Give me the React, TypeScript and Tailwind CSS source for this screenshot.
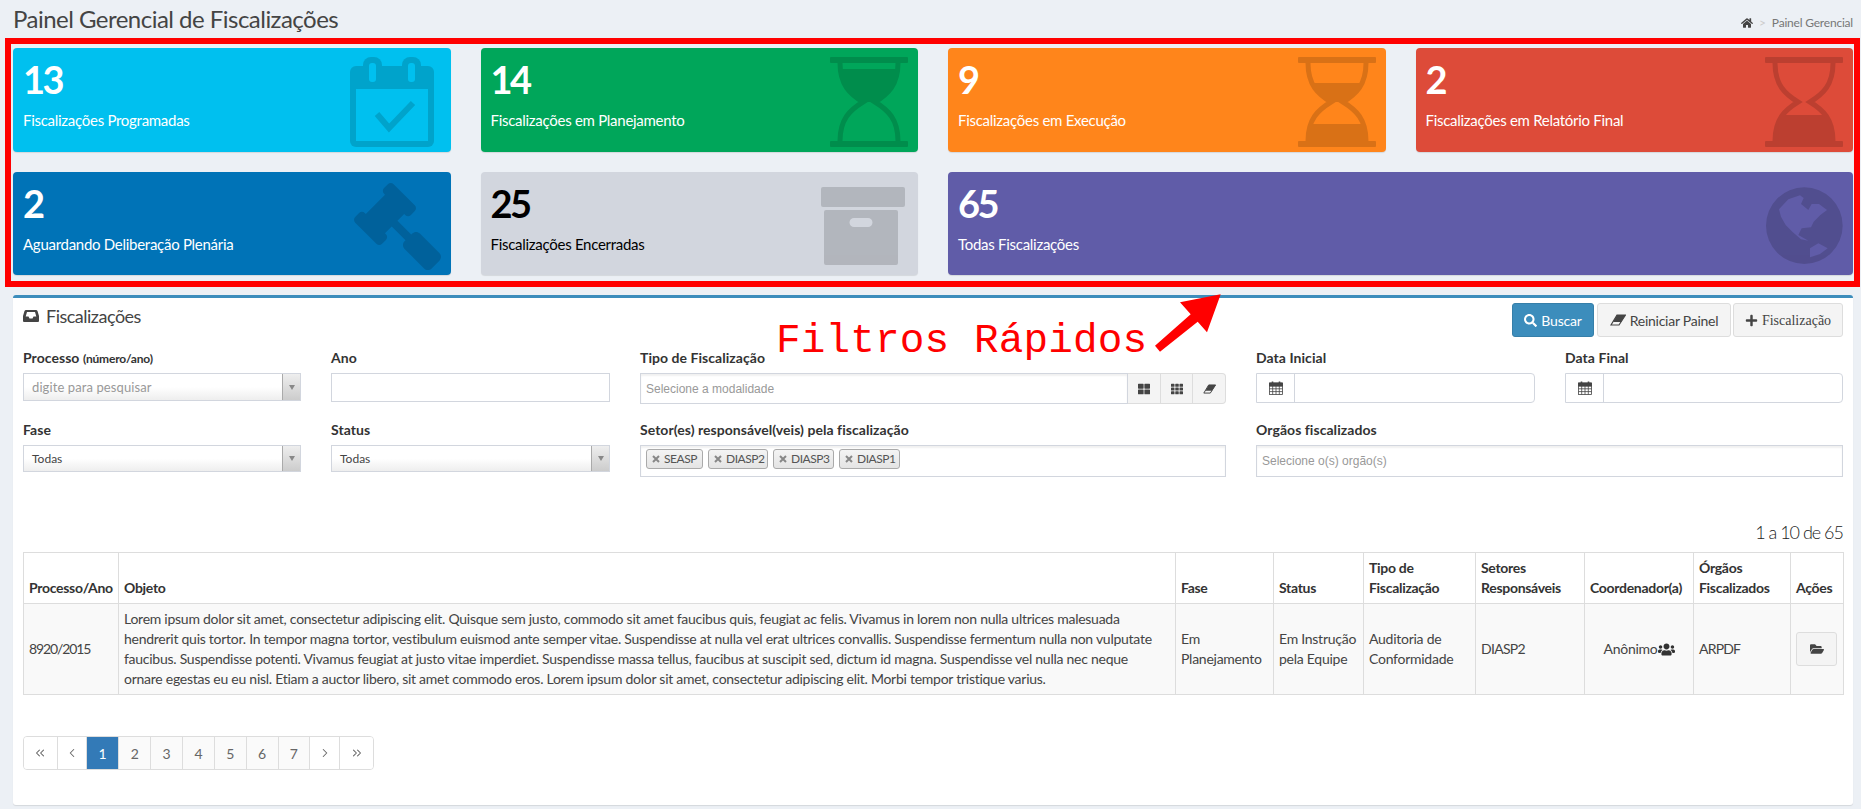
import type { ReactNode } from "react";
import { ChevronLeft, ChevronRight, ChevronsLeft, ChevronsRight } from "lucide-react";
import { FaFolderOpen, FaGavel, FaHome, FaPlus, FaSearch, FaTh, FaThLarge, FaUsers } from "react-icons/fa";

function Hourglass({ id, topFrom, bottomFrom }: { id: string; topFrom: number; bottomFrom: number }) {
  return (
    <svg viewBox="0 0 78 90" className="absolute right-[10px] top-[9px] h-[90px] w-[78px] opacity-15">
      <defs>
        <clipPath id={`top-${id}`}>
          <rect x="0" y={topFrom} width="78" height={46 - topFrom} />
        </clipPath>
        <clipPath id={`bottom-${id}`}>
          <rect x="0" y={bottomFrom} width="78" height={84 - bottomFrom} />
        </clipPath>
      </defs>
      <rect x="0" y="0" width="78" height="6" rx="1" />
      <rect x="0" y="84" width="78" height="6" rx="1" />
      <path d="M10 6C10 28 20 37 33 45C20 53 10 62 10 84" fill="none" stroke="#000" strokeWidth="5" />
      <path d="M68 6C68 28 58 37 45 45C58 53 68 62 68 84" fill="none" stroke="#000" strokeWidth="5" />
      <path clipPath={`url(#top-${id})`} d="M10 6C10 28 20 37 33 45H45C58 37 68 28 68 6Z" />
      <path clipPath={`url(#bottom-${id})`} d="M33 45C20 53 10 62 10 84H68C68 62 58 53 45 45Z" />
    </svg>
  );
}

function CalendarCheckIcon() {
  return (
    <svg viewBox="0 0 84 90" className="absolute right-[17px] top-[9px] h-[90px] w-[84px] opacity-15">
      <defs>
        <mask id="cal-mask">
          <rect width="84" height="90" fill="#fff" />
          <rect x="6" y="32" width="72" height="52" fill="#000" />
          <rect x="19" y="6" width="7" height="19" rx="3" fill="#000" />
          <rect x="58" y="6" width="7" height="19" rx="3" fill="#000" />
        </mask>
      </defs>
      <g mask="url(#cal-mask)">
        <rect x="0" y="9" width="84" height="81" rx="6" />
        <rect x="13" y="0" width="19" height="28" rx="8" />
        <rect x="52" y="0" width="19" height="28" rx="8" />
      </g>
      <path d="M27 57L39 71L63 46" fill="none" stroke="#000" strokeWidth="6" />
    </svg>
  );
}

function ArchiveIcon() {
  return (
    <svg viewBox="0 0 84 78" className="absolute right-[13px] top-[15px] h-[78px] w-[84px] opacity-15">
      <rect x="0" y="0" width="84" height="20" rx="2" />
      <path
        fillRule="evenodd"
        d="M5 23H75A2 2 0 0 1 77 25V76A2 2 0 0 1 75 78H5A2 2 0 0 1 3 76V25A2 2 0 0 1 5 23ZM33 31A3 3 0 0 0 33 40H47A3 3 0 0 0 47 31Z"
      />
    </svg>
  );
}

function GlobeIcon() {
  return (
    <svg viewBox="0 0 288 276" className="absolute right-[2px] top-[8px] h-[92px] w-[96px] opacity-15">
      <path
        fillRule="evenodd"
        d="M33 137a115 115 0 1 0 230 0a115 115 0 1 0 -230 0ZM72 88L100 58L135 46L146 54L138 72L160 90L170 72L192 72L216 90L196 105L176 125L168 142L140 145L130 165L160 182L138 178L112 155L92 135L78 110ZM165 205L190 190L218 205L195 222L165 232Z"
      />
    </svg>
  );
}

function InboxIcon() {
  return (
    <svg viewBox="0 0 16 14" className="h-[14px] w-4 text-[#444]">
      <path
        fill="currentColor"
        fillRule="evenodd"
        d="M3 1H13Q14 1 14.5 2L16 7V12Q16 13 15 13H1Q0 13 0 12V7L1.5 2Q2 1 3 1ZM4 3L2.7 7.5H5.5L6.5 9.5H9.5L10.5 7.5H13.3L12 3Z"
      />
    </svg>
  );
}

function EraserIcon({ className }: { className: string }) {
  return (
    <svg viewBox="0 0 16 12" className={className}>
      <path d="M7 1H15.5L9 11H1Z" fill="none" stroke="currentColor" strokeWidth="1.2" />
      <path d="M7 1H15.5L11 8H3Z" fill="currentColor" />
    </svg>
  );
}

function TagCross() {
  return (
    <svg viewBox="0 0 8 8" className="h-2 w-2 text-[#888]" fill="none" stroke="currentColor" strokeWidth="2">
      <path d="M1 1L7 7M7 1L1 7" />
    </svg>
  );
}

function CalendarSmall() {
  return (
    <svg viewBox="0 0 14 14" className="h-[14px] w-[14px] text-[#444]" fill="none" stroke="currentColor" strokeWidth="0.8">
      <rect x="0.5" y="2" width="13" height="11.5" />
      <path d="M0.5 5H13.5M0.5 7.8H13.5M0.5 10.6H13.5M3.7 5V13.5M7 5V13.5M10.3 5V13.5" />
      <path d="M0.5 2H13.5V5H0.5Z" fill="currentColor" />
      <path d="M3.5 0.5V3M10.5 0.5V3" strokeWidth="1.6" />
    </svg>
  );
}

const boxes = [
  { value: "13", label: "Fiscalizações Programadas", bg: "bg-[#00c0ef]", h: "h-[104px]", icon: <CalendarCheckIcon /> },
  { value: "14", label: "Fiscalizações em Planejamento", bg: "bg-[#00a65a]", h: "h-[104px]", icon: <Hourglass id="start" topFrom={12} bottomFrom={84} /> },
  { value: "9", label: "Fiscalizações em Execução", bg: "bg-[#ff851b]", h: "h-[104px]", icon: <Hourglass id="half" topFrom={26} bottomFrom={67} /> },
  { value: "2", label: "Fiscalizações em Relatório Final", bg: "bg-[#dd4b39]", h: "h-[104px]", icon: <Hourglass id="end" topFrom={46} bottomFrom={58} /> },
  {
    value: "2",
    label: "Aguardando Deliberação Plenária",
    bg: "bg-[#0073b7]",
    h: "h-[103px]",
    icon: <FaGavel className="absolute right-[10px] top-[11px] h-[87px] w-[87px] -scale-x-100 opacity-15" color="#000" />,
  },
  { value: "25", label: "Fiscalizações Encerradas", bg: "bg-[#d2d6de]", h: "h-[103px]", dark: true, icon: <ArchiveIcon /> },
  { value: "65", label: "Todas Fiscalizações", bg: "bg-[#605ca8]", h: "h-[103px]", wide: true, icon: <GlobeIcon /> },
];

function Field({ label, note, className, children }: { label: string; note?: string; className?: string; children: ReactNode }) {
  return (
    <div className={className}>
      <div className="mb-[5px] h-5 text-[14px] font-bold leading-5 tracking-[0.05px] text-[#333]">
        {label} {note && <span className="text-[12px] tracking-[-0.2px]">{note}</span>}
      </div>
      {children}
    </div>
  );
}

function SelectBox({ text, placeholder, height }: { text: string; placeholder?: boolean; height: string }) {
  return (
    <div className={`flex ${height} items-center justify-between border border-[#d2d6de] bg-gradient-to-b from-white from-50% to-[#eeeeee]`}>
      <span className={placeholder ? "pl-2 pt-[1px] text-[13px] tracking-[0.1px] text-[#999]" : "pl-2 text-[12px] text-[#444]"}>{text}</span>
      <span className="flex h-full w-[18px] items-center justify-center border-l border-[#aaa] bg-gradient-to-b from-[#eeeeee] to-[#cccccc]">
        <span className="h-0 w-0 border-x-[3px] border-t-[5px] border-x-transparent border-t-[#888]" />
      </span>
    </div>
  );
}

function DateInput() {
  return (
    <div className="flex h-[30px] rounded-r border border-[#d2d6de] bg-white">
      <span className="flex w-[38px] items-center justify-center border-r border-[#d2d6de]">
        <CalendarSmall />
      </span>
    </div>
  );
}

const tags = [
  { text: "SEASP", w: "w-[57px]" },
  { text: "DIASP2", w: "w-[60px]" },
  { text: "DIASP3", w: "w-[61px]" },
  { text: "DIASP1", w: "w-[61px]" },
];

const headers = [
  { text: "Processo/Ano", w: "w-[95px]" },
  { text: "Objeto", w: "w-[1057px]" },
  { text: "Fase", w: "w-[98px]" },
  { text: "Status", w: "w-[90px]" },
  { text: "Tipo de Fiscalização", w: "w-[112px]" },
  { text: "Setores Responsáveis", w: "w-[109px]" },
  { text: "Coordenador(a)", w: "w-[109px]" },
  { text: "Órgãos Fiscalizados", w: "w-[97px]" },
  { text: "Ações", w: "w-[53px]" },
];

const chevron = { size: 14, strokeWidth: 1.8 };

const pages = [
  { node: <ChevronsLeft {...chevron} />, w: "w-[34px]" },
  { node: <ChevronLeft {...chevron} />, w: "w-[29px]" },
  { node: "1", w: "w-[33px]", active: true },
  { node: "2", w: "w-[32px]" },
  { node: "3", w: "w-[32px]" },
  { node: "4", w: "w-[32px]" },
  { node: "5", w: "w-[32px]" },
  { node: "6", w: "w-[32px]" },
  { node: "7", w: "w-[32px]" },
  { node: <ChevronRight {...chevron} />, w: "w-[30px]" },
  { node: <ChevronsRight {...chevron} />, w: "w-[33px]" },
];

const td = "border border-[#ddd] p-[5px] align-middle";

export default function App() {
  return (
    <div className="relative min-h-[809px] overflow-hidden bg-[#ecf0f5] pl-[13px] pr-2 font-['Lato',sans-serif] text-[14px] text-[#333]">
      {/* Header */}
      <div className="flex h-12 items-start justify-between">
        <h1 className="pt-1 text-[24px] font-normal leading-[30px] tracking-[-0.52px] text-[#444]">
          Painel Gerencial de Fiscalizações
        </h1>
        <div className="flex items-center gap-[6px] pt-[15px] text-[12px] leading-4 tracking-[-0.2px] text-[#777]">
          <FaHome className="h-3 w-3 text-[#444]" />
          <span className="text-[#ccc]">&gt;</span>
          <span>Painel Gerencial</span>
        </div>
      </div>

      {/* Quick filters */}
      <div className="grid grid-cols-4 gap-x-[30px] gap-y-5">
        {boxes.map((box) => (
          <div
            key={box.label}
            className={`relative overflow-hidden rounded-sm p-[10px] shadow-[0_1px_1px_rgba(0,0,0,0.1)] ${box.bg} ${box.h} ${box.wide ? "col-span-2" : ""} ${box.dark ? "text-black" : "text-white"}`}
          >
            <div className="mb-[10px] text-[38px] font-bold leading-[42px] tracking-[-2.5px]">{box.value}</div>
            <div className="text-[15px] leading-5 tracking-[-0.28px]">{box.label}</div>
            {box.icon}
          </div>
        ))}
      </div>

      {/* Panel */}
      <div className="mt-5 rounded-[3px] border-t-[3px] border-[#3c8dbc] bg-white px-[10px] pb-[35px] shadow-[0_1px_1px_rgba(0,0,0,0.1)]">
        <div className="flex items-start justify-between pt-[5px]">
          <div className="flex items-center gap-[7px] pt-[1px] text-[18px] leading-6 tracking-[-0.5px] text-[#444]">
            <InboxIcon />
            Fiscalizações
          </div>
          <div className="flex">
            <button className="flex h-[34px] w-[82px] items-center justify-center gap-1 rounded-[3px] border border-[#367fa9] bg-[#3c8dbc] tracking-[-0.2px] text-white">
              <FaSearch className="h-[13px] w-[13px]" />
              Buscar
            </button>
            <button className="ml-[3px] flex h-[34px] w-[134px] items-center justify-center gap-1 rounded-[3px] border border-[#ddd] bg-[#f4f4f4] tracking-[-0.25px] text-[#444]">
              <EraserIcon className="h-[12px] w-[16px]" />
              Reiniciar Painel
            </button>
            <button className="ml-[2px] flex h-[34px] w-[110px] items-center justify-center gap-1 rounded-[3px] border border-[#ddd] bg-[#f4f4f4] font-['Liberation_Serif',serif] text-[#444]">
              <FaPlus className="h-[13px] w-[13px]" />
              Fiscalização
            </button>
          </div>
        </div>

        <div className="mt-[11px] grid grid-cols-[278px_279px_586px_279px_278px] gap-x-[30px] gap-y-4">
          <Field label="Processo" note="(número/ano)">
            <SelectBox text="digite para pesquisar" placeholder height="h-[28px]" />
          </Field>
          <Field label="Ano">
            <div className="h-[29px] border border-[#d2d6de] bg-white" />
          </Field>
          <Field label="Tipo de Fiscalização">
            <div className="flex h-[31px]">
              <div className="flex flex-1 items-center border border-[#d2d6de] bg-white pl-[5px] font-['Liberation_Sans',sans-serif] text-[12px] text-[#999] shadow-[inset_0_2px_2px_rgba(0,0,0,0.06)]">
                Selecione a modalidade
              </div>
              <div className="flex w-[98px] rounded-r border border-l-0 border-[#ddd] bg-[#f4f4f4] text-[#444]">
                <span className="flex flex-1 items-center justify-center border-r border-[#ddd]">
                  <FaThLarge className="h-3 w-3" />
                </span>
                <span className="flex flex-1 items-center justify-center border-r border-[#ddd]">
                  <FaTh className="h-3 w-3" />
                </span>
                <span className="flex flex-1 items-center justify-center">
                  <EraserIcon className="h-[10px] w-[13px]" />
                </span>
              </div>
            </div>
          </Field>
          <Field label="Data Inicial">
            <DateInput />
          </Field>
          <Field label="Data Final">
            <DateInput />
          </Field>

          <Field label="Fase">
            <SelectBox text="Todas" height="h-[27px]" />
          </Field>
          <Field label="Status">
            <SelectBox text="Todas" height="h-[27px]" />
          </Field>
          <Field label="Setor(es) responsável(veis) pela fiscalização">
            <div className="flex h-8 items-start gap-[5px] border border-[#d2d6de] bg-white pl-[5px] pt-[3px] shadow-[inset_0_2px_2px_rgba(0,0,0,0.06)]">
              {tags.map((tag) => (
                <span
                  key={tag.text}
                  className={`flex h-5 items-center gap-1 rounded-[3px] border border-[#aaa] bg-gradient-to-b from-[#f4f4f4] to-[#e4e4e4] pl-[5px] text-[12px] tracking-[-0.45px] text-[#555] ${tag.w}`}
                >
                  <TagCross />
                  {tag.text}
                </span>
              ))}
            </div>
          </Field>
          <Field label="Orgãos fiscalizados" className="col-span-2">
            <div className="flex h-8 items-center border border-[#d2d6de] bg-white pl-[5px] font-['Liberation_Sans',sans-serif] text-[12px] text-[#999] shadow-[inset_0_2px_2px_rgba(0,0,0,0.06)]">
              Selecione o(s) orgão(s)
            </div>
          </Field>
        </div>

        <div className="mb-2 mt-[43px] text-right text-[18px] font-light leading-6 tracking-[-1px] text-[#222]">1 a 10 de 65</div>

        <table className="w-[1820px] table-fixed border-collapse border border-[#ddd] text-[14px] leading-5 tracking-[-0.26px] text-[#444]">
          <colgroup>
            {headers.map((h) => (
              <col key={h.text} className={h.w} />
            ))}
          </colgroup>
          <thead>
            <tr>
              {headers.map((h) => (
                <th key={h.text} className="border border-[#ddd] p-[5px] text-left align-bottom font-bold tracking-[-0.3px] text-[#333]">
                  {h.text}
                </th>
              ))}
            </tr>
          </thead>
          <tbody>
            <tr className="bg-[#f9f9f9]">
              <td className={`${td} tracking-[-1.1px]`}>8920/2015</td>
              <td className={`${td} whitespace-nowrap`}>
                Lorem ipsum dolor sit amet, consectetur adipiscing elit. Quisque sem justo, commodo sit amet faucibus quis, feugiat ac felis. Vivamus in lorem non nulla ultrices malesuada
                <br />
                hendrerit quis tortor. In tempor magna tortor, vestibulum euismod ante semper vitae. Suspendisse at nulla vel erat ultrices convallis. Suspendisse fermentum nulla non vulputate
                <br />
                faucibus. Suspendisse potenti. Vivamus feugiat at justo vitae imperdiet. Suspendisse massa tellus, faucibus at suscipit sed, dictum id magna. Suspendisse vel nulla nec neque
                <br />
                ornare egestas eu eu nisl. Etiam a auctor libero, sit amet commodo eros. Lorem ipsum dolor sit amet, consectetur adipiscing elit. Morbi tempor tristique varius.
              </td>
              <td className={td}>Em Planejamento</td>
              <td className={td}>Em Instrução pela Equipe</td>
              <td className={td}>Auditoria de Conformidade</td>
              <td className={`${td} tracking-[-0.7px]`}>DIASP2</td>
              <td className={td}>
                <span className="flex items-center justify-center">
                  Anônimo
                  <FaUsers className="h-[17px] w-[17px] shrink-0 text-[#333]" />
                </span>
              </td>
              <td className={`${td} tracking-[-0.8px]`}>ARPDF</td>
              <td className={td}>
                <button className="flex h-[34px] w-[41px] items-center justify-center rounded-[3px] border border-[#ddd] bg-[#f4f4f4] text-[#444]">
                  <FaFolderOpen className="h-[14px] w-[14px]" />
                </button>
              </td>
            </tr>
          </tbody>
        </table>

        <div className="mt-[41px] flex h-[34px] w-[351px] overflow-hidden rounded border border-[#ddd] bg-[#fafafa]">
          {pages.map((page, i) => (
            <span
              key={i}
              className={`flex items-center justify-center border-r border-[#ddd] last:border-r-0 ${page.w} ${page.active ? "border-[#337ab7] bg-[#337ab7] text-white" : "text-[#666]"} ${i < 2 || i > 8 ? "bg-white" : ""}`}
            >
              {page.node}
            </span>
          ))}
        </div>
      </div>

      {/* Annotation */}
      <div className="pointer-events-none absolute left-[5px] top-[38px] h-[249px] w-[1855px] border-[6px] border-[#ff0000]" />
      <div className="pointer-events-none absolute left-[776px] top-[318px] font-['Liberation_Mono',monospace] text-[41px] leading-[46px] tracking-[0.15px] text-[#ff0000]">
        Filtros Rápidos
      </div>
      <svg className="pointer-events-none absolute left-[1150px] top-[290px] h-[70px] w-[80px]" viewBox="0 0 80 70">
        <path fill="#ff0000" d="M70.7 4.3L30 12.3L40.7 24.3L5 55.7L10 61.7L47.7 31.7L57 42.3Z" />
      </svg>
    </div>
  );
}
